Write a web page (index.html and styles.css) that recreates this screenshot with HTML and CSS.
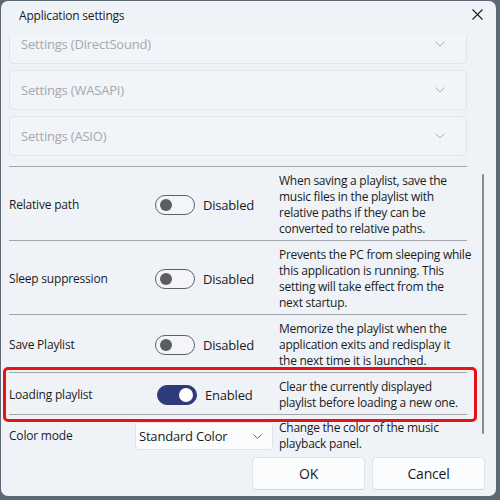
FILE: index.html
```html
<!DOCTYPE html>
<html lang="en">
<head>
<meta charset="utf-8">
<title>Application settings</title>
<link rel="stylesheet" href="styles.css">
</head>
<body>
<div class="dialog">
  <div class="titlebar">
    <span class="title">Application settings</span>
    <button class="close" aria-label="Close">
      <svg width="11" height="11" viewBox="0 0 11 11"><path d="M0.5 0.5 L10.5 10.5 M10.5 0.5 L0.5 10.5" stroke="#1b1b1b" stroke-width="1.1" fill="none"/></svg>
    </button>
  </div>
  <div class="scroll">
    <div class="content">
      <div class="expander"><span>Settings (DirectSound)</span><svg class="chev" width="10" height="6" viewBox="0 0 10 6"><path d="M0.5 0.5 L5 5 L9.5 0.5" stroke="#a9acb0" stroke-width="1" fill="none"/></svg></div>
      <div class="expander"><span>Settings (WASAPI)</span><svg class="chev" width="10" height="6" viewBox="0 0 10 6"><path d="M0.5 0.5 L5 5 L9.5 0.5" stroke="#a9acb0" stroke-width="1" fill="none"/></svg></div>
      <div class="expander"><span>Settings (ASIO)</span><svg class="chev" width="10" height="6" viewBox="0 0 10 6"><path d="M0.5 0.5 L5 5 L9.5 0.5" stroke="#a9acb0" stroke-width="1" fill="none"/></svg></div>

      <div class="row">
        <div class="label">Relative path</div>
        <div class="control"><span class="toggle"><span class="knob"></span></span><span class="state">Disabled</span></div>
        <div class="desc">When saving a playlist, save the<br>music files in the playlist with<br>relative paths if they can be<br>converted to relative paths.</div>
      </div>
      <div class="row">
        <div class="label">Sleep suppression</div>
        <div class="control"><span class="toggle"><span class="knob"></span></span><span class="state">Disabled</span></div>
        <div class="desc">Prevents the PC from sleeping while<br>this application is running. This<br>setting will take effect from the<br>next startup.</div>
      </div>
      <div class="row">
        <div class="label">Save Playlist</div>
        <div class="control"><span class="toggle"><span class="knob"></span></span><span class="state">Disabled</span></div>
        <div class="desc">Memorize the playlist when the<br>application exits and redisplay it<br>the next time it is launched.</div>
      </div>
      <div class="row highlighted">
        <div class="label">Loading playlist</div>
        <div class="control shifted"><span class="toggle on"><span class="knob"></span></span><span class="state">Enabled</span></div>
        <div class="desc">Clear the currently displayed<br>playlist before loading a new one.</div>
        <div class="mark"></div>
      </div>
      <div class="row last">
        <div class="label">Color mode</div>
        <div class="combo"><span>Standard Color</span><svg width="9" height="5" viewBox="0 0 9 5"><path d="M0.5 0.5 L4.5 4.5 L8.5 0.5" stroke="#6b6b6b" stroke-width="1" fill="none"/></svg></div>
        <div class="desc">Change the color of the music<br>playback panel.</div>
      </div>
    </div>
    <div class="scrollbar"></div>
  </div>
  <div class="footer">
    <button class="btn">OK</button>
    <button class="btn">Cancel</button>
  </div>
</div>
</body>
</html>
```

FILE: styles.css
```css
* { box-sizing: border-box; }
html, body { margin: 0; padding: 0; }
body {
  width: 500px;
  height: 500px;
  background: #5c6876;
  font-family: "Open Sans", "Noto Sans", sans-serif;
  color: #1b1b1b;
  overflow: hidden;
}
.dialog {
  margin: 1px 0 0 1px;
  width: 495px;
  height: 495px;
  background: #eff3f8;
  border-radius: 7px;
  display: flex;
  flex-direction: column;
  overflow: hidden;
}
.titlebar {
  height: 35px;
  flex: none;
  display: flex;
  align-items: center;
  justify-content: space-between;
  padding: 0 12px 0 18px;
}
.title {
  font-size: 12px;
  letter-spacing: -0.2px;
  margin-top: -7px;
}
.close {
  border: 0;
  background: transparent;
  padding: 0;
  width: 12px;
  height: 12px;
  display: flex;
  margin-top: -7px;
}
.scroll {
  position: relative;
  height: 420px;
  flex: none;
  overflow: hidden;
  padding-left: 8px;
}
.content {
  width: 458px;
  margin-top: -12px;
  display: flex;
  flex-direction: column;
}
.expander {
  height: 40px;
  border: 1px solid #e1e4e9;
  border-radius: 4px;
  background: #f1f4f8;
  margin-bottom: 6px;
  display: flex;
  align-items: center;
  justify-content: space-between;
  padding: 0 21px 0 11px;
  font-size: 13px;
  color: #a6a9ad;
  letter-spacing: -0.2px;
}
.expander:nth-child(3) { margin-bottom: 10px; }
.row {
  position: relative;
  display: grid;
  grid-template-columns: 126px 144px 1fr;
  align-items: center;
  border-top: 1px solid #a3a6aa;
  padding: 6px 0 3px;
}
.row.highlighted { border-bottom: 1px solid #a3a6aa; }
.row.last { border-top: 0; padding-top: 5px; }
.label {
  font-size: 12px;
  letter-spacing: -0.2px;
  margin-top: -2px;
}
.control {
  display: flex;
  align-items: center;
  padding-left: 20px;
  margin-top: -1px;
}
.control.shifted { padding-left: 22px; }
.toggle {
  position: relative;
  width: 40px;
  height: 20px;
  border: 1px solid #5e6166;
  border-radius: 10px;
  background: #f3f5f8;
  flex: none;
}
.toggle .knob {
  position: absolute;
  left: 4px;
  top: 3px;
  width: 12px;
  height: 12px;
  border-radius: 50%;
  background: #5b5d61;
}
.toggle.on {
  background: #2e3a79;
  border-color: #2e3a79;
}
.toggle.on .knob {
  left: auto;
  right: 3px;
  top: 2px;
  width: 14px;
  height: 14px;
  background: #ffffff;
}
.state {
  margin-left: 8px;
  font-size: 13px;
  letter-spacing: -0.2px;
}
.desc {
  font-size: 12px;
  line-height: 16px;
  white-space: nowrap;
  letter-spacing: -0.25px;
}
.combo {
  width: 138px;
  height: 28px;
  border: 1px solid #e1e3e6;
  border-radius: 4px;
  background: #fbfcfd;
  display: flex;
  align-items: center;
  justify-content: space-between;
  padding: 0 10px 0 3px;
  font-size: 13px;
  letter-spacing: -0.2px;
}
.mark {
  position: absolute;
  left: -6px;
  right: -10px;
  top: -6px;
  bottom: -8px;
  border: 3px solid #ea1111;
  border-radius: 5px;
  pointer-events: none;
}
.scrollbar {
  position: absolute;
  left: 481px;
  top: 138px;
  width: 2px;
  height: 260px;
  border-radius: 1px;
  background: #858a90;
}
.footer {
  flex: 1;
  display: flex;
  justify-content: flex-end;
  gap: 7px;
  padding: 1px 11px 0 0;
}
.btn {
  width: 113px;
  height: 33px;
  border: 1px solid #e1e3e7;
  border-bottom-color: #d2d4d8;
  border-radius: 4px;
  background: #fbfcfd;
  font-family: "Open Sans", "Noto Sans", sans-serif;
  font-size: 14px;
  color: #1b1b1b;
  letter-spacing: -0.2px;
}
```
